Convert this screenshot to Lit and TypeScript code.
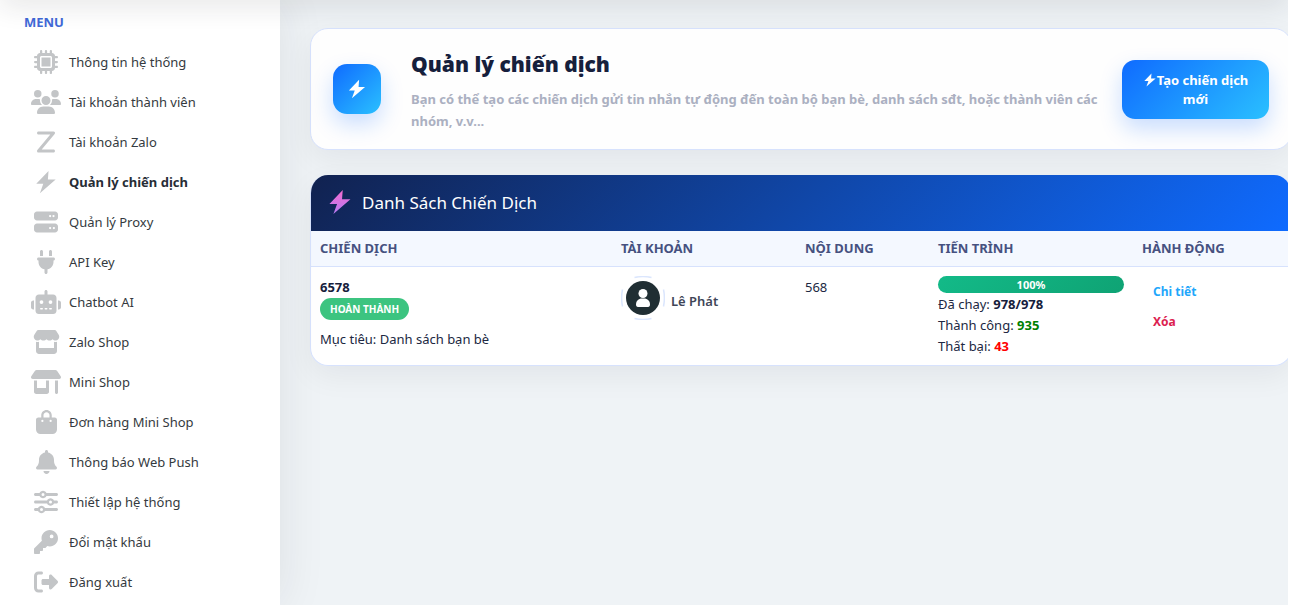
import { LitElement, html, css, svg } from "lit";
import { customElement } from "lit/decorators.js";
import { classMap } from "lit/directives/class-map.js";

const BOLT = "M310 20 48 294h150l-72 200 336-290H296z";

interface Icon { w: number; d: string; }
const icons: Record<string, Icon> = {
  chip: { w: 512, d: "M176 24c0-13.3-10.7-24-24-24s-24 10.7-24 24V64c-35.3 0-64 28.7-64 64H24c-13.3 0-24 10.7-24 24s10.7 24 24 24H64v56H24c-13.3 0-24 10.7-24 24s10.7 24 24 24H64v56H24c-13.3 0-24 10.7-24 24s10.7 24 24 24H64c0 35.3 28.7 64 64 64v40c0 13.3 10.7 24 24 24s24-10.7 24-24V448h56v40c0 13.3 10.7 24 24 24s24-10.7 24-24V448h56v40c0 13.3 10.7 24 24 24s24-10.7 24-24V448c35.3 0 64-28.7 64-64h40c13.3 0 24-10.7 24-24s-10.7-24-24-24H448V280h40c13.3 0 24-10.7 24-24s-10.7-24-24-24H448V176h40c13.3 0 24-10.7 24-24s-10.7-24-24-24H448c0-35.3-28.7-64-64-64V24c0-13.3-10.7-24-24-24s-24 10.7-24 24V64H280V24c0-13.3-10.7-24-24-24s-24 10.7-24 24V64H176V24zM160 128H352c17.7 0 32 14.3 32 32V352c0 17.7-14.3 32-32 32H160c-17.7 0-32-14.3-32-32V160c0-17.7 14.3-32 32-32zm192 32H160V352H352V160z" },
  users: { w: 640, d: "M144 0a80 80 0 1 1 0 160A80 80 0 1 1 144 0zM512 0a80 80 0 1 1 0 160A80 80 0 1 1 512 0zM0 298.7C0 239.8 47.8 192 106.7 192h42.7c15.9 0 31 3.5 44.6 9.7c-1.3 7.2-1.9 14.7-1.9 22.3c0 38.2 16.8 72.5 43.3 96c-.2 0-.4 0-.7 0H21.3C9.6 320 0 310.4 0 298.7zM405.3 320c-.2 0-.4 0-.7 0c26.6-23.5 43.3-57.8 43.3-96c0-7.6-.7-15-1.9-22.3c13.6-6.3 28.7-9.7 44.6-9.7h42.7C592.2 192 640 239.8 640 298.7c0 11.8-9.6 21.3-21.3 21.3H405.3zM224 224a96 96 0 1 1 192 0 96 96 0 1 1 -192 0zM128 485.3C128 411.7 187.7 352 261.3 352H378.7C452.3 352 512 411.7 512 485.3c0 14.7-11.9 26.7-26.7 26.7H154.7c-14.7 0-26.7-11.9-26.7-26.7z" },
  z: { w: 384, d: "M0 64C0 46.3 14.3 32 32 32H352c12.4 0 23.7 7.2 29 18.4s3.6 24.5-4.4 34.1L100.3 416H352c17.7 0 32 14.3 32 32s-14.3 32-32 32H32c-12.4 0-23.7-7.2-29-18.4s-3.6-24.5 4.4-34.1L283.7 96H32C14.3 96 0 81.7 0 64z" },
  bolt: { w: 512, d: BOLT },
  server: { w: 512, d: "M64 32C28.7 32 0 60.7 0 96v64c0 35.3 28.7 64 64 64H448c35.3 0 64-28.7 64-64V96c0-35.3-28.7-64-64-64H64zm280 72a24 24 0 1 1 0 48 24 24 0 1 1 0-48zm48 24a24 24 0 1 1 48 0 24 24 0 1 1 -48 0zM64 288c-35.3 0-64 28.7-64 64v64c0 35.3 28.7 64 64 64H448c35.3 0 64-28.7 64-64V352c0-35.3-28.7-64-64-64H64zm280 72a24 24 0 1 1 0 48 24 24 0 1 1 0-48zm56 24a24 24 0 1 1 48 0 24 24 0 1 1 -48 0z" },
  plug: { w: 384, d: "M96 0C78.3 0 64 14.3 64 32v96h64V32c0-17.7-14.3-32-32-32zM288 0c-17.7 0-32 14.3-32 32v96h64V32c0-17.7-14.3-32-32-32zM32 160c-17.7 0-32 14.3-32 32s14.3 32 32 32v32c0 77.4 55 142 128 156.8V480c0 17.7 14.3 32 32 32s32-14.3 32-32V412.8C297 398 352 333.4 352 256V224c17.7 0 32-14.3 32-32s-14.3-32-32-32H32z" },
  robot: { w: 640, d: "M320 0c17.7 0 32 14.3 32 32V96H472c39.8 0 72 32.2 72 72V440c0 39.8-32.2 72-72 72H168c-39.8 0-72-32.2-72-72V168c0-39.8 32.2-72 72-72H288V32c0-17.7 14.3-32 32-32zM208 384c-8.8 0-16 7.2-16 16s7.2 16 16 16h32c8.8 0 16-7.2 16-16s-7.2-16-16-16H208zm96 0c-8.8 0-16 7.2-16 16s7.2 16 16 16h32c8.8 0 16-7.2 16-16s-7.2-16-16-16H304zm96 0c-8.8 0-16 7.2-16 16s7.2 16 16 16h32c8.8 0 16-7.2 16-16s-7.2-16-16-16H400zM264 256a40 40 0 1 0 -80 0 40 40 0 1 0 80 0zm152 40a40 40 0 1 0 0-80 40 40 0 1 0 0 80zM48 224H64V416H48c-26.5 0-48-21.5-48-48V272c0-26.5 21.5-48 48-48zm544 0c26.5 0 48 21.5 48 48v96c0 26.5-21.5 48-48 48H576V224h16z" },
  store: { w: 576, d: "M547.6 103.8L490.3 13.1C485.2 5 476.1 0 466.4 0H109.6C99.9 0 90.8 5 85.7 13.1L28.3 103.8c-29.6 46.8-3.4 111.9 51.9 119.4c4 .5 8.1 .8 12.1 .8c26.1 0 49.3-11.4 65.2-29c15.9 17.6 39.1 29 65.2 29c26.1 0 49.3-11.4 65.2-29c15.9 17.6 39.1 29 65.2 29c26.2 0 49.3-11.4 65.2-29c16 17.6 39.1 29 65.2 29c4.1 0 8.1-.3 12.1-.8c55.5-7.4 81.8-72.5 52.1-119.4zM499.7 254.9l-.1 0c-5.3 .7-10.7 1.1-16.2 1.1c-12.4 0-24.3-1.9-35.4-5.3V384H128V250.6c-11.2 3.5-23.2 5.4-35.6 5.4c-5.5 0-11-.4-16.3-1.1l-.1 0c-4.1-.6-8.1-1.3-12-2.3V384v64c0 35.3 28.7 64 64 64H448c35.3 0 64-28.7 64-64V384 252.6c-4 1-8 1.8-12.3 2.3z" },
  shop: { w: 640, d: "M36.8 192H603.2c20.3 0 36.8-16.5 36.8-36.8c0-7.3-2.2-14.4-6.2-20.4L558.2 21.4C549.3 8 534.4 0 518.3 0H121.7c-16 0-31 8-39.9 21.4L6.2 134.7c-4 6.1-6.2 13.2-6.2 20.4C0 175.5 16.5 192 36.8 192zM64 224V384v80c0 26.5 21.5 48 48 48H336c26.5 0 48-21.5 48-48V384 224H320V384H128V224H64zm448 0V480c0 17.7 14.3 32 32 32s32-14.3 32-32V224H512z" },
  bag: { w: 448, d: "M160 112c0-35.3 28.7-64 64-64s64 28.7 64 64v48H160V112zm-48 48H48c-26.5 0-48 21.5-48 48V416c0 53 43 96 96 96H352c53 0 96-43 96-96V208c0-26.5-21.5-48-48-48H336V112C336 50.1 285.9 0 224 0S112 50.1 112 112v48zm24 48a24 24 0 1 1 0 48 24 24 0 1 1 0-48zm152 24a24 24 0 1 1 48 0 24 24 0 1 1 -48 0z" },
  bell: { w: 448, d: "M224 0c-17.7 0-32 14.3-32 32V51.2C119 66 64 130.6 64 208v18.8c0 47-17.3 92.4-48.5 127.6l-7.4 8.3c-8.4 9.4-10.4 22.9-5.3 34.4S19.4 416 32 416H416c12.6 0 24-7.4 29.2-18.9s3.1-25-5.3-34.4l-7.4-8.3C401.3 319.2 384 273.9 384 226.8V208c0-77.4-55-142-128-156.8V32c0-17.7-14.3-32-32-32zm45.3 493.3c12-12 18.7-28.3 18.7-45.3H224 160c0 17 6.7 33.3 18.7 45.3s28.3 18.7 45.3 18.7s33.3-6.7 45.3-18.7z" },
  sliders: { w: 512, d: "M0 416c0 17.7 14.3 32 32 32l54.7 0c12.3 28.3 40.5 48 73.3 48s61-19.7 73.3-48L480 448c17.7 0 32-14.3 32-32s-14.3-32-32-32l-246.7 0c-12.3-28.3-40.5-48-73.3-48s-61 19.7-73.3 48L32 384c-17.7 0-32 14.3-32 32zm128 0a32 32 0 1 1 64 0 32 32 0 1 1 -64 0zM320 256a32 32 0 1 1 64 0 32 32 0 1 1 -64 0zm32-80c-32.8 0-61 19.7-73.3 48L32 224c-17.7 0-32 14.3-32 32s14.3 32 32 32l246.7 0c12.3 28.3 40.5 48 73.3 48s61-19.7 73.3-48l54.7 0c17.7 0 32-14.3 32-32s-14.3-32-32-32l-54.7 0c-12.3-28.3-40.5-48-73.3-48zM192 128a32 32 0 1 1 0-64 32 32 0 1 1 0 64zm73.3-64C253 35.7 224.8 16 192 16s-61 19.7-73.3 48L32 64C14.3 64 0 78.3 0 96s14.3 32 32 32l86.7 0c12.3 28.3 40.5 48 73.3 48s61-19.7 73.3-48L480 128c17.7 0 32-14.3 32-32s-14.3-32-32-32L265.3 64z" },
  key: { w: 512, d: "M336 352c97.2 0 176-78.8 176-176S433.2 0 336 0S160 78.8 160 176c0 18.7 2.9 36.8 8.3 53.7L7 391c-4.5 4.5-7 10.6-7 17v80c0 13.3 10.7 24 24 24h80c13.3 0 24-10.7 24-24V448h40c13.3 0 24-10.7 24-24V384h40c6.4 0 12.5-2.5 17-7l33.3-33.3c16.9 5.4 35 8.3 53.7 8.3zM376 96a40 40 0 1 1 0 80 40 40 0 1 1 0-80z" },
  exit: { w: 512, d: "M377.9 105.9L500.7 228.7c7.2 7.2 11.3 17.1 11.3 27.3s-4.1 20.1-11.3 27.3L377.9 406.1c-6.4 6.4-15 9.9-24 9.9c-18.7 0-33.9-15.2-33.9-33.9l0-62.1-128 0c-17.7 0-32-14.3-32-32l0-64c0-17.7 14.3-32 32-32l128 0 0-62.1c0-18.7 15.2-33.9 33.9-33.9c9 0 17.6 3.6 24 9.9zM160 96L96 96c-17.7 0-32 14.3-32 32l0 256c0 17.7 14.3 32 32 32l64 0c17.7 0 32 14.3 32 32s-14.3 32-32 32l-64 0c-53 0-96-43-96-96L0 128C0 75 43 32 96 32l64 0c17.7 0 32 14.3 32 32s-14.3 32-32 32z" },
};

const glyph = (name: string) => {
  const i = icons[name];
  return html`<svg class="glyph" viewBox="0 0 ${i.w} 512" aria-hidden="true">${svg`<path fill-rule="evenodd" d=${i.d}></path>`}</svg>`;
};

const menu: [string, string][] = [
  ["chip", "Thông tin hệ thống"],
  ["users", "Tài khoản thành viên"],
  ["z", "Tài khoản Zalo"],
  ["bolt", "Quản lý chiến dịch"],
  ["server", "Quản lý Proxy"],
  ["plug", "API Key"],
  ["robot", "Chatbot AI"],
  ["store", "Zalo Shop"],
  ["shop", "Mini Shop"],
  ["bag", "Đơn hàng Mini Shop"],
  ["bell", "Thông báo Web Push"],
  ["sliders", "Thiết lập hệ thống"],
  ["key", "Đổi mật khẩu"],
  ["exit", "Đăng xuất"],
];

@customElement("side-menu")
export class SideMenu extends LitElement {
  static styles = css`
    :host { display: block; background: #fff; }
    .title { margin: 0; padding: 12px 24px 8px; font-size: 13px; line-height: 20px; font-weight: 700; color: #4169d8; }
    .list { list-style: none; margin: 0; padding: 2px 0 0; }
    .link { display: flex; align-items: center; gap: 8px; height: 40px; padding-left: 31px; font-size: 13px; color: #343a40; text-decoration: none; white-space: nowrap; }
    .current { font-weight: 700; color: #272d36; }
    .icon { display: flex; justify-content: center; width: 30px; }
    .glyph { display: block; height: 24px; fill: #c3c5c7; }
  `;
  render() {
    return html`<nav aria-label="Menu">
      <h2 class="title">MENU</h2>
      <ul class="list">
        ${menu.map(([icon, label]) => html`<li>
          <a class=${classMap({ link: true, current: icon === "bolt" })} href="#"><span class="icon">${glyph(icon)}</span>${label}</a>
        </li>`)}
      </ul>
    </nav>`;
  }
}

@customElement("campaign-hero")
export class CampaignHero extends LitElement {
  static styles = css`
    :host { display: block; }
    .card { display: flex; align-items: center; box-sizing: border-box; padding: 17px 22px; border: 1px solid #d7e2fd; border-radius: 18px; background: #fefefe; box-shadow: 0 10px 30px rgba(20, 25, 35, .06); }
    .badge { display: flex; align-items: center; justify-content: center; flex: none; width: 48px; height: 50px; margin-right: 30px; border-radius: 14px; background: linear-gradient(135deg, #0f6bff, #2ac0ff); box-shadow: 0 10px 22px rgba(15, 107, 255, .22); }
    .badge .glyph { width: 20px; height: 20px; fill: #fff; }
    .copy { flex: 1; min-width: 0; padding-top: 2px; }
    .heading { margin: 0 0 8px; font-size: 21px; line-height: 32px; font-weight: 900; color: #16203c; }
    .lead { margin: 0; font-size: 13px; line-height: 22px; font-weight: 700; color: #abb0c1; }
    .create { flex: none; width: 147px; padding: 11px 14px 10px; border: 0; border-radius: 13px; background: linear-gradient(135deg, #0f6bff, #2ac0ff); box-shadow: 0 10px 22px rgba(15, 107, 255, .22); color: #fff; font: 700 13px/19px "Noto Sans", sans-serif; cursor: pointer; }
    .create .glyph { width: 14px; height: 14px; fill: #fff; vertical-align: -2px; }
  `;
  render() {
    return html`<section class="card">
      <span class="badge">${glyph("bolt")}</span>
      <div class="copy">
        <h1 class="heading">Quản lý chiến dịch</h1>
        <p class="lead">Bạn có thể tạo các chiến dịch gửi tin nhắn tự động đến toàn bộ bạn bè, danh sách sđt, hoặc thành viên các nhóm, v.v...</p>
      </div>
      <button class="create" type="button">${glyph("bolt")}Tạo chiến dịch mới</button>
    </section>`;
  }
}

@customElement("campaign-table")
export class CampaignTable extends LitElement {
  static styles = css`
    :host { display: block; }
    .card { overflow: hidden; border: 1px solid #d7e2fd; border-top: 0; border-radius: 18px; background: #fff; }
    .shadow { border-radius: 18px; box-shadow: 0 10px 30px rgba(20, 25, 35, .06); }
    .bar { display: flex; align-items: center; gap: 9px; height: 54px; padding: 0 16px 2px; background: linear-gradient(135deg, #112250, #0f6bff); }
    .bar-icon { display: block; width: 26px; height: 26px; }
    .bar-title { margin: 0; font-size: 17px; font-weight: 400; color: #fff; }
    .grid { width: 100%; table-layout: fixed; border-collapse: collapse; font-size: 13px; line-height: 21px; color: #202842; }
    .col-name { width: 301px; }
    .col-account { width: 184px; }
    .col-body { width: 133px; }
    .col-progress { width: 204px; }
    th { height: 35px; padding: 0 9px; border-bottom: 1px solid #d7e2fd; background: #f4f8ff; text-align: left; font-size: 13px; font-weight: 700; color: #465180; }
    td { padding: 9px 9px 8px; vertical-align: top; }
    .top { padding-top: 10px; }
    .name { display: block; color: #16203c; }
    .state { display: block; width: fit-content; margin-bottom: 9px; padding: 0 10px; border-radius: 11px; background: #3cc480; color: #fff; font-size: 10px; line-height: 22px; font-weight: 700; }
    .account { display: flex; align-items: center; gap: 6px; font-weight: 600; color: #3f4658; }
    .who { padding-top: 6px; }
    .avatar { display: block; width: 44px; height: 44px; }
    .meter { margin-bottom: 1px; border-radius: 9px; background: linear-gradient(135deg, #13ba88, #0fa374); color: #fff; text-align: center; font-size: 11px; line-height: 17px; font-weight: 700; }
    .ok { color: #008000; }
    .fail { color: #f00; }
    .total { color: #16203c; }
    .actions { display: flex; flex-direction: column; align-items: flex-start; padding: 0 11px; }
    .action { padding: 0; border: 0; background: none; font: 700 12px/30px "Noto Sans", sans-serif; color: #1fa7fb; text-decoration: none; cursor: pointer; }
    .danger { color: #dc2150; }
  `;
  render() {
    return html`<div class="shadow"><section class="card">
      <header class="bar">
        <svg class="bar-icon" viewBox="0 0 512 512" aria-hidden="true">
          <defs><linearGradient id="pink" x1="0" y1="0" x2="0" y2="1"><stop offset="0" stop-color="#f56bd0"></stop><stop offset="1" stop-color="#b47bf2"></stop></linearGradient></defs>
          <path fill="url(#pink)" d=${BOLT}></path>
        </svg>
        <h2 class="bar-title">Danh Sách Chiến Dịch</h2>
      </header>
      <table class="grid">
        <colgroup><col class="col-name"><col class="col-account"><col class="col-body"><col class="col-progress"><col></colgroup>
        <thead><tr><th>CHIẾN DỊCH</th><th>TÀI KHOẢN</th><th>NỘI DUNG</th><th>TIẾN TRÌNH</th><th>HÀNH ĐỘNG</th></tr></thead>
        <tbody><tr>
          <td class="top"><strong class="name">6578</strong><span class="state">HOÀN THÀNH</span>Mục tiêu: Danh sách bạn bè</td>
          <td><div class="account">
            <svg class="avatar" viewBox="0 0 44 44" aria-hidden="true">
              <circle cx="22" cy="22" r="17" fill="#202e33"></circle>
              <circle cx="22" cy="17.5" r="4.5" fill="#fff"></circle>
              <path fill="#fff" d="M15 28.5c0-3.500 2.500-6 6-6h2c3.500 0 6 2.500 6 6 0 1.500-.6 2.500-2 2.500H17c-1.400 0-2-1-2-2.500z"></path>
              <path fill="none" stroke="#dbe6fd" stroke-width="1.5" d="M13.500 1.500q8.500-1.800 17 0M13.500 42.500q8.500 1.800 17 0M1.500 13.500q-1.800 8.500 0 17M42.500 13.500q1.800 8.500 0 17"></path>
            </svg><span class="who">Lê Phát</span></div></td>
          <td class="top">568</td>
          <td>
            <div class="meter">100%</div>
            <div>Đã chạy: <strong class="total">978/978</strong></div>
            <div>Thành công: <strong class="ok">935</strong></div>
            <div>Thất bại: <strong class="fail">43</strong></div>
          </td>
          <td class="top"><div class="actions"><a class="action" href="#">Chi tiết</a><button class="action danger" type="button">Xóa</button></div></td>
        </tr></tbody>
      </table>
    </section></div>`;
  }
}

@customElement("app-root")
export class AppRoot extends LitElement {
  static styles = css`
    :host { display: block; padding-right: 2px; background: #fff; font-family: "Noto Sans", sans-serif; }
    .page { position: relative; display: grid; grid-template-columns: 280px minmax(0, 1fr); min-height: 100vh; overflow: hidden; background: #eff3f6; }
    .side { z-index: 1; box-shadow: 0 0 45px rgba(33, 37, 41, .09); }
    .topshade { position: absolute; z-index: 2; top: -20px; left: 0; right: 0; height: 20px; box-shadow: 0 4px 28px rgba(33, 37, 41, .14); pointer-events: none; }
    .main { display: flex; flex-direction: column; gap: 25px; margin-right: -4px; padding: 28px 0 0 30px; }
  `;
  render() {
    return html`<div class="page">
      <side-menu class="side"></side-menu>
      <main class="main"><campaign-hero></campaign-hero><campaign-table></campaign-table></main>
      <div class="topshade"></div>
    </div>`;
  }
}
